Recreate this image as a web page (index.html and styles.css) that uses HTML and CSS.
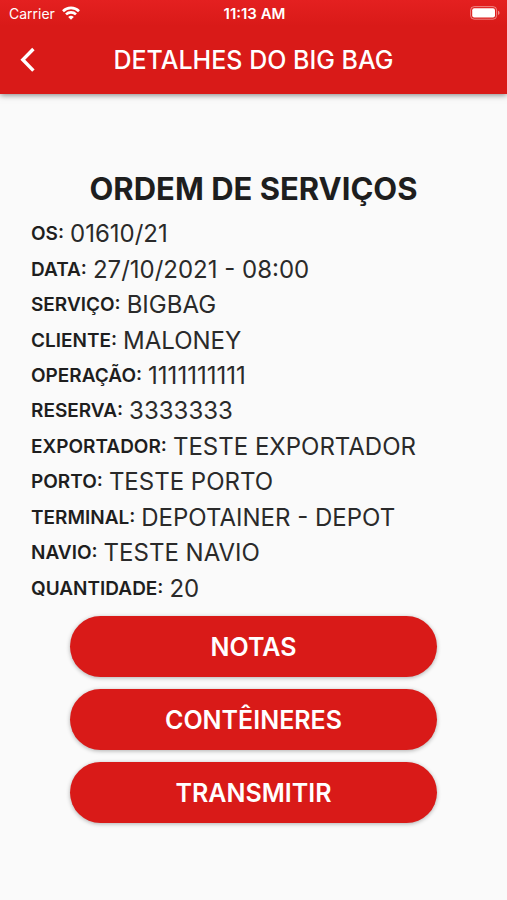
FILE: index.html
```html
<!DOCTYPE html>
<html lang="pt-BR">

<head>
    <meta charset="UTF-8">
    <meta name="viewport" content="width=device-width, initial-scale=1.0">
    <title>Detalhes do Big Bag</title>
    <link rel="stylesheet" href="styles.css">
</head>

<body>
    <header class="app-header">
        <!-- Status bar -->
        <div class="status-bar">
            <div class="carrier">
                <span>Carrier</span>
                <svg class="wifi" viewBox="0 0 18 14" aria-hidden="true">
                    <g fill="none" stroke="#fff" stroke-width="2.6">
                        <path d="M1 5.2a11.4 11.4 0 0 1 16 0" />
                        <path d="M4 8.4a7.2 7.2 0 0 1 10 0" />
                    </g>
                    <path d="M9 13.8L6.2 11a4 4 0 0 1 5.6 0z" fill="#fff" />
                </svg>
            </div>
            <span class="clock">11:13 AM</span>
            <svg class="battery" viewBox="0 0 30 14" aria-hidden="true">
                <rect x="0.6" y="0.6" width="26" height="12.6" rx="3.6" fill="none" stroke="#fff" stroke-opacity="0.45" />
                <rect x="2.2" y="2.2" width="22.8" height="9.4" rx="2" fill="#fff" />
                <path d="M28 4.8c2 .6 2 3.6 0 4.2z" fill="#fff" fill-opacity="0.5" />
            </svg>
        </div>

        <!-- Navigation -->
        <div class="nav-bar">
            <button type="button" class="back" aria-label="Voltar">
                <svg viewBox="0 0 16 26" aria-hidden="true">
                    <path d="M13.4 2L2.8 12.8L13.4 23.6" fill="none" stroke="#fff" stroke-width="3.4" />
                </svg>
            </button>
            <h1>DETALHES DO BIG BAG</h1>
        </div>
    </header>

    <main class="content">
        <h2>ORDEM DE SERVIÇOS</h2>

        <dl class="details">
            <div class="row"><dt>OS:</dt><dd>01610/21</dd></div>
            <div class="row"><dt>DATA:</dt><dd>27/10/2021 - 08:00</dd></div>
            <div class="row"><dt>SERVIÇO:</dt><dd>BIGBAG</dd></div>
            <div class="row"><dt>CLIENTE:</dt><dd>MALONEY</dd></div>
            <div class="row"><dt>OPERAÇÃO:</dt><dd>1111111111</dd></div>
            <div class="row"><dt>RESERVA:</dt><dd>3333333</dd></div>
            <div class="row"><dt>EXPORTADOR:</dt><dd>TESTE EXPORTADOR</dd></div>
            <div class="row"><dt>PORTO:</dt><dd>TESTE PORTO</dd></div>
            <div class="row"><dt>TERMINAL:</dt><dd>DEPOTAINER - DEPOT</dd></div>
            <div class="row"><dt>NAVIO:</dt><dd>TESTE NAVIO</dd></div>
            <div class="row"><dt>QUANTIDADE:</dt><dd>20</dd></div>
        </dl>

        <div class="actions">
            <button type="button" class="action">NOTAS</button>
            <button type="button" class="action">CONTÊINERES</button>
            <button type="button" class="action">TRANSMITIR</button>
        </div>
    </main>
</body>

</html>
```

FILE: styles.css
```css
* {
    box-sizing: border-box;
}

body {
    margin: 0;
    font-family: Inter, "Liberation Sans", sans-serif;
    background-color: #fafafa;
    color: #1e1e1e;
}

h1,
h2,
dl,
dd {
    margin: 0;
}

button {
    border: none;
    font-family: inherit;
    color: white;
    cursor: pointer;
}

/* Header */
.app-header {
    background: linear-gradient(#e42020, #d91a18 26px);
    color: white;
    box-shadow: 0 1px 6px rgba(0, 0, 0, 0.5);
}

.status-bar {
    display: grid;
    grid-template-columns: 1fr auto 1fr;
    align-items: center;
    height: 26px;
    padding: 0 7px 0 9px;
    font-size: 14px;
}

.carrier {
    display: flex;
    align-items: center;
    gap: 7px;
}

.wifi {
    width: 18px;
    height: 14px;
}

.clock {
    font-size: 15px;
    font-weight: 600;
}

.battery {
    width: 30px;
    height: 14px;
    justify-self: end;
}

.nav-bar {
    display: grid;
    grid-template-columns: 56px 1fr 56px;
    align-items: center;
    height: 68px;
}

.nav-bar h1 {
    font-size: 25px;
    font-weight: 500;
    text-align: center;
    white-space: nowrap;
}

.back {
    display: flex;
    justify-content: center;
    padding: 12px 0;
    background: none;
}

.back svg {
    width: 16px;
    height: 26px;
}

/* Order details */
.content {
    padding: 75px 31px 32px;
}

.content h2 {
    font-size: 31px;
    font-weight: 700;
    line-height: 40px;
    text-align: center;
    margin-bottom: 7px;
}

.details {
    display: grid;
    grid-auto-rows: 1fr;
    min-height: 390px;
}

.row {
    display: flex;
    align-items: center;
    gap: 6px;
}

.row dt {
    font-size: 19px;
    font-weight: 600;
}

.row dd {
    font-size: 24px;
    font-weight: 400;
    color: #2a2a2a;
}

/* Buttons */
.actions {
    display: flex;
    flex-direction: column;
    gap: 12px;
    padding: 10px 39px 0;
}

.action {
    height: 61px;
    border-radius: 31px;
    background-color: #d91a18;
    font-size: 25px;
    font-weight: 600;
    box-shadow: 0 1px 4px rgba(0, 0, 0, 0.3);
}
```
